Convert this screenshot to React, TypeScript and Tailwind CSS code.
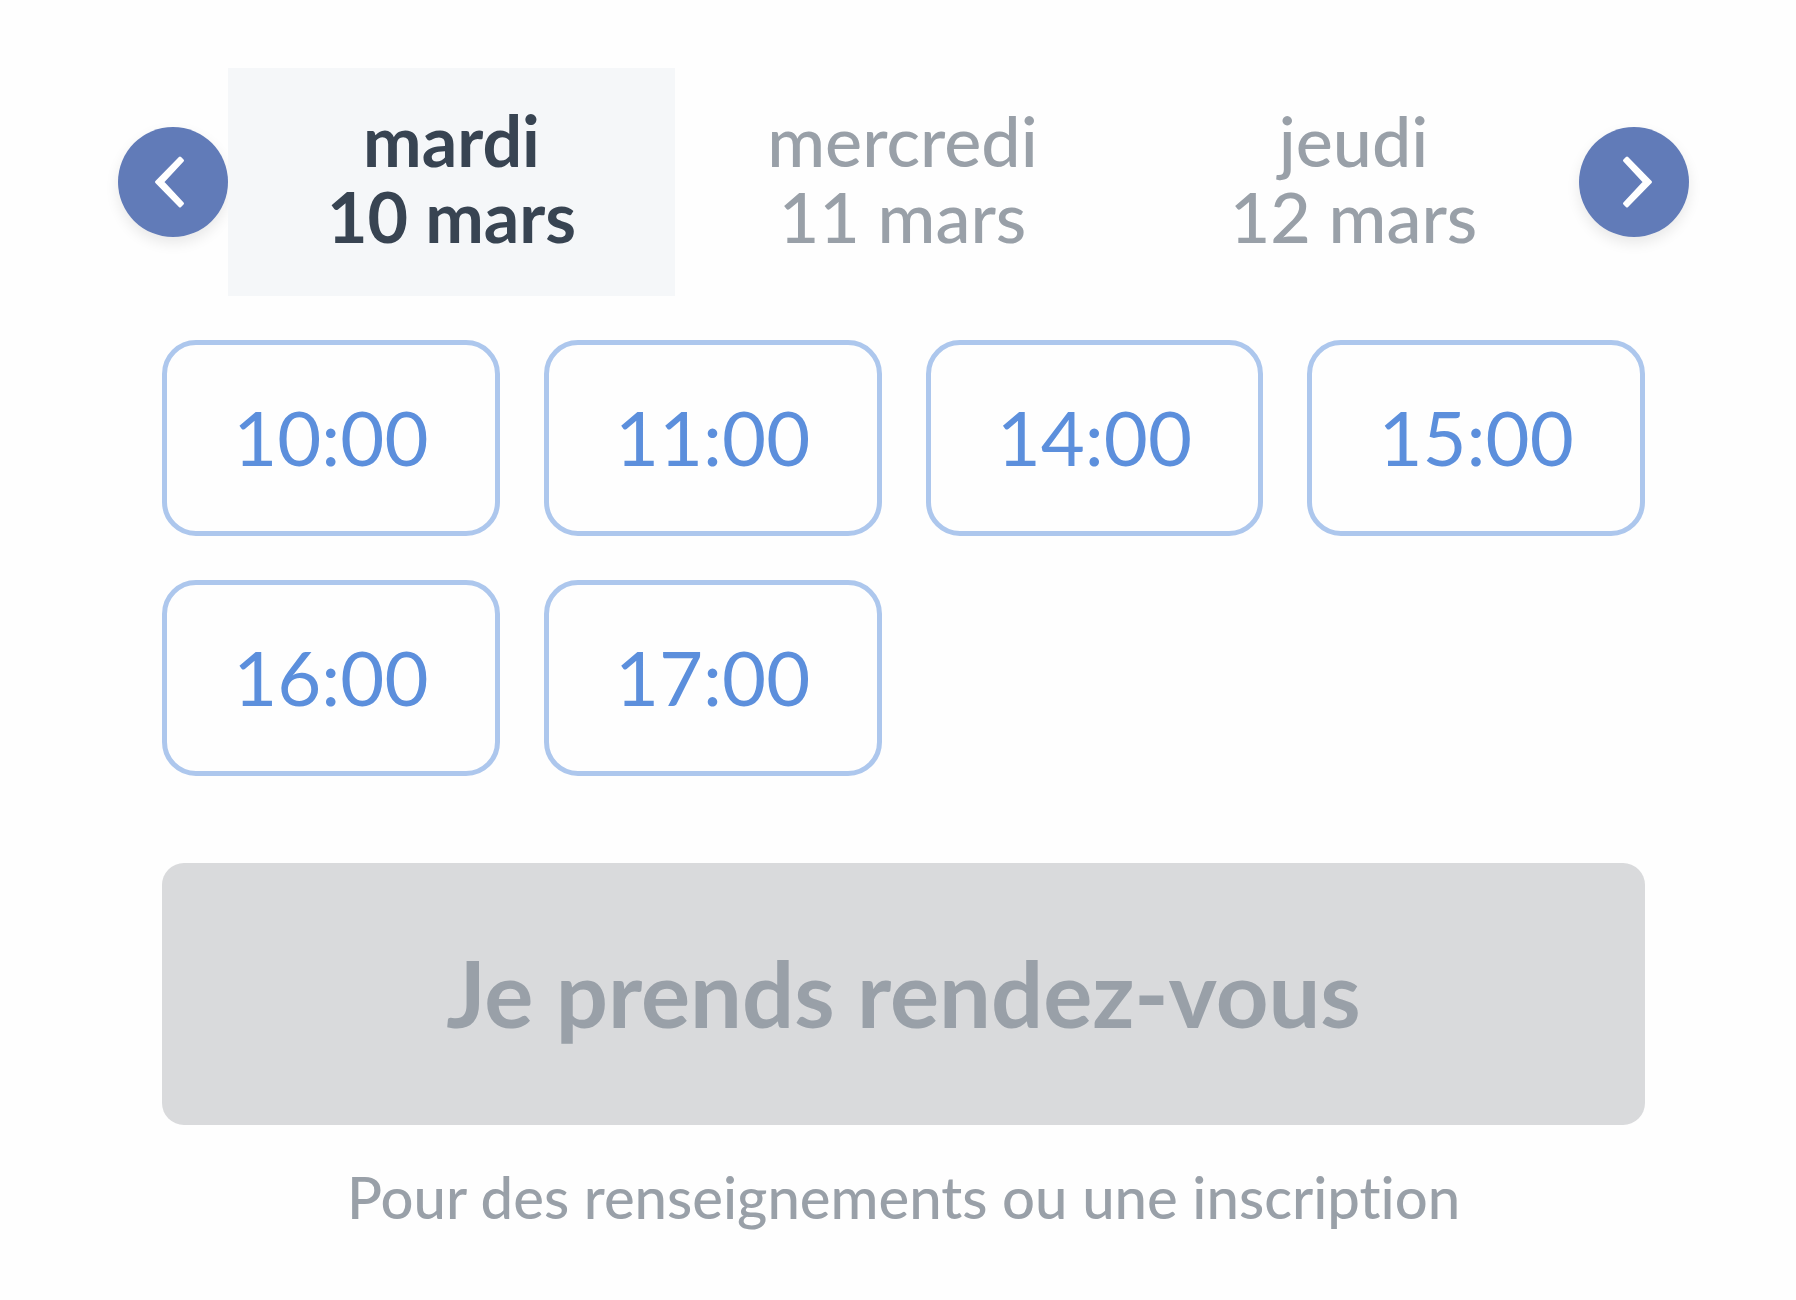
import { useState } from "react";

const days = [
  { name: "mardi", date: "10 mars" },
  { name: "mercredi", date: "11 mars" },
  { name: "jeudi", date: "12 mars" },
];

const slots = ["10:00", "11:00", "14:00", "15:00", "16:00", "17:00"];

function ArrowButton({ label, points }: { label: string; points: string }) {
  return (
    <button
      type="button"
      aria-label={label}
      className="flex size-[110px] shrink-0 items-center justify-center rounded-full bg-[#617bb8] shadow-[0_6px_14px_rgba(0,0,0,0.09)]"
    >
      <svg
        viewBox="0 0 110 110"
        className="size-full"
        fill="#fff"
        stroke="#fff"
        strokeWidth="3"
        strokeLinejoin="round"
        aria-hidden="true"
      >
        <polygon points={points} />
      </svg>
    </button>
  );
}

export default function App() {
  const [day, setDay] = useState(0);

  return (
    <main className="min-h-screen bg-[#fefefe] pt-[68px] pr-[107px] pb-16 pl-[118px] font-['Lato',sans-serif] [font-variant-ligatures:none]">
      <div className="flex items-center">
        <ArrowButton
          label="Jours précédents"
          points="62,31 64.5,33.5 44.5,55 64.5,76.5 62,79 38.5,55"
        />
        <div className="mr-0.5 grid grow grid-cols-3 gap-1">
          {days.map((d, i) => (
            <button
              key={d.date}
              type="button"
              aria-pressed={i === day}
              onClick={() => setDay(i)}
              className={
                i === day
                  ? "bg-[#f5f7f9] pt-[34px] pb-[42px] text-center text-[70px] leading-[76px] font-bold text-[#384452]"
                  : "pt-[34px] pb-[42px] text-center text-[70px] leading-[76px] font-medium text-[#99a0a8]"
              }
            >
              <span className="block">{d.name}</span>
              <span className="block">{d.date}</span>
            </button>
          ))}
        </div>
        <ArrowButton
          label="Jours suivants"
          points="48,31 45.5,33.5 65.5,55 45.5,76.5 48,79 71.5,55"
        />
      </div>

      <div className="px-11">
        <div className="mt-11 grid grid-cols-4 gap-11">
          {slots.map((slot) => (
            <button
              key={slot}
              type="button"
              className="rounded-[34px] border-[5px] border-[#adc7ed] pt-11 pb-[46px] text-center text-[76px] leading-[96px] text-[#5c8fdc]"
            >
              {slot}
            </button>
          ))}
        </div>
        <button
          type="button"
          disabled
          className="mt-[87px] w-full rounded-[22px] bg-[#d9dadc] pt-[76px] pb-[78px] text-center text-[92px] leading-[108px] font-bold text-[#99a0a8]"
        >
          Je prends rendez-vous
        </button>
        <p className="mt-9 text-center text-[58px] leading-[72px] font-medium text-[#99a0a8]">
          Pour des renseignements ou une inscription
        </p>
      </div>
    </main>
  );
}
